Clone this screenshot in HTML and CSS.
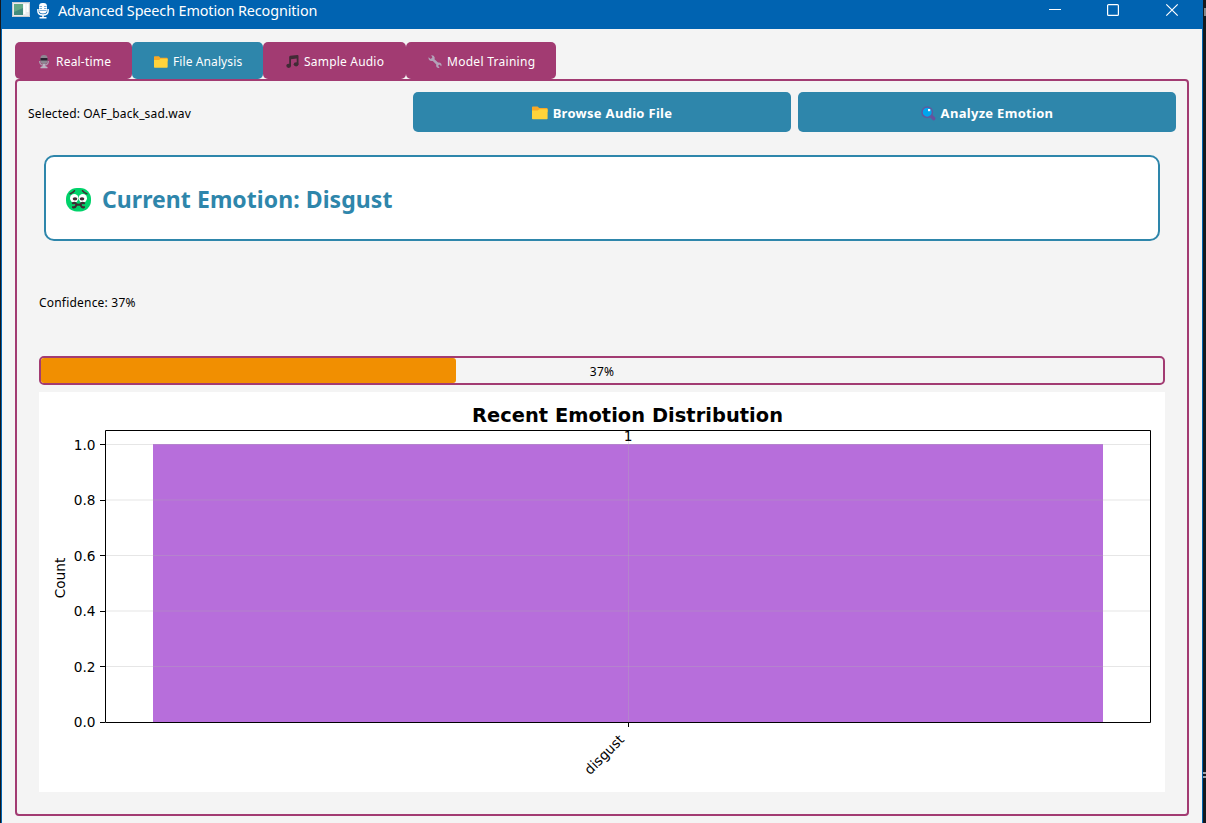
FILE: index.html
```html
<!DOCTYPE html>
<html lang="en">
<head>
<meta charset="utf-8">
<title>Advanced Speech Emotion Recognition</title>
<link rel="stylesheet" href="styles.css">
</head>
<body>
<svg class="defs" aria-hidden="true">
  <symbol id="folder" viewBox="0 0 16 14">
    <path d="M0 1.2Q0 .4.8.4H5.6L7.2 2H14.8Q15.6 2 15.6 2.8V6H0Z" fill="#f9a825"/>
    <path d="M0 4.6H5.8L7.4 3.2H15.6V12.4Q15.6 13.2 14.8 13.2H.8Q0 13.2 0 12.4Z" fill="#ffd43b"/>
  </symbol>
</svg>
<div class="window">
  <header class="titlebar">
    <svg class="app-icon" width="18" height="15" viewBox="0 0 18 15"><rect width="18" height="15" fill="#e9eaec"/><rect x="2" y="2" width="9" height="11" fill="#438b7d"/><path d="M2 2H11V6L2 10Z" fill="#62a986"/><path d="M12.5 2V12M15.5 2V10" stroke="#fff" stroke-width="2"/><path d="M.5.5H17.5V14.5H.5Z" fill="none" stroke="#c8ccd1"/></svg>
    <svg class="title-mic" width="12" height="16" viewBox="0 0 12 16"><rect x="2" y="0" width="8" height="10.5" rx="3.4" fill="#fff"/><path d="M2.5 3.5H5M7 3.5H9.5M2.5 5.5H5M7 5.5H9.5M2.5 7.5H9.5" stroke="#0063b1" stroke-width=".5"/><path d="M.9 6V8Q.9 12 6 12T11.1 8V6M6 12V14.5M2.5 14.8H9.5" fill="none" stroke="#fff" stroke-width="1.5"/></svg>
    <span class="title">Advanced Speech Emotion Recognition</span>
    <svg class="controls" width="132" height="14" viewBox="0 0 132 14"><path d="M0 6.5H12" stroke="#fff"/><rect x="58.6" y="1.6" width="10.8" height="10.8" rx="1" fill="none" stroke="#fff" stroke-width="1.2"/><path d="M117.3 1.3L128.7 12.7M128.7 1.3L117.3 12.7" stroke="#fff" stroke-width="1.2"/></svg>
  </header>
  <main class="content">
    <nav class="tabs">
      <div class="tab tab-realtime">
        <svg width="10" height="14" viewBox="0 0 10 14"><rect x="1.5" y="0" width="7" height="9" rx="3.2" fill="#8d8792"/><path d="M1.5 3.5Q1.5 3 2.3 3H7.7Q8.5 3 8.5 3.5V5.5H1.5Z" fill="#2b2230"/><path d="M.6 6Q.6 10.2 5 10.2T9.4 6" fill="none" stroke="#aaa0b0" stroke-width="1.2"/><path d="M3.8 9H6.2V11L8.5 12V13.2H1.5V12L3.8 11Z" fill="#bbb3c1"/></svg>
        <span>Real-time</span>
      </div>
      <div class="tab tab-file active">
        <svg width="14" height="12" viewBox="0 0 16 13.5" preserveAspectRatio="none"><use href="#folder" width="16" height="14"/></svg>
        <span>File Analysis</span>
      </div>
      <div class="tab tab-sample">
        <svg width="13" height="13" viewBox="0 0 13 13"><path d="M3.2 2Q3.2 1 4.2.8L11.5 0Q12.5 0 12.5 1V9H10.7V3.6L5 4.3V11H3.2Z" fill="#402b35"/><ellipse cx="2.7" cy="10.8" rx="2.4" ry="2.1" fill="#402b35"/><ellipse cx="10.1" cy="9.3" rx="2.4" ry="2.1" fill="#402b35"/></svg>
        <span>Sample Audio</span>
      </div>
      <div class="tab tab-model">
        <svg width="14" height="14" viewBox="0 0 14 14"><path d="M3.2.3Q5.8-.1 6.6 2.2Q6.9 3.2 6.5 4.2L10 7.5Q12 7 13.2 8.7Q13.9 10 13.3 11.3L11.3 9.6L10.1 10.7L11.5 12.8Q10 13.5 8.8 12.3Q7.8 11 8.3 9.4L4.8 5.9Q2.6 6.5 1.2 5Q.2 3.8.6 2.2L2.7 4L4.4 2.5Z" fill="#b3a3b9"/></svg>
        <span>Model Training</span>
      </div>
    </nav>
    <section class="pane">
      <div class="toolbar">
        <div class="selected"><span>Selected: OAF_back_sad.wav</span></div>
        <div class="button browse"><svg width="16" height="14" viewBox="0 0 16 14"><use href="#folder" width="16" height="14"/></svg><span>Browse Audio File</span></div>
        <div class="button analyze"><svg width="15" height="15" viewBox="0 0 15 15"><path d="M10.6 10.6L12.7 12.6" stroke="#6b4f9c" stroke-width="3.4" stroke-linecap="round"/><circle cx="6.2" cy="6.2" r="5.2" fill="#00a6ed" stroke="#5f5a9e" stroke-width="1.5"/><rect x="7" y="3" width="2.2" height="2.2" fill="#fff"/></svg><span>Analyze Emotion</span></div>
      </div>
      <div class="emotion">
        <svg width="25" height="24" viewBox="0 0 25 24"><rect width="25" height="23.4" rx="10.8" fill="#00d26a"/><circle cx="8.2" cy="10.2" r="4.2" fill="#fff"/><circle cx="16.8" cy="10.2" r="4.2" fill="#fff"/><ellipse cx="9" cy="10.8" rx="2.3" ry="1.6" fill="#402a32"/><ellipse cx="16" cy="10.8" rx="2.3" ry="1.6" fill="#402a32"/><path d="M4.2 5.7Q6.6 5.1 8.5 2.7M20.8 5.7Q18.4 5.1 16.5 2.7" fill="none" stroke="#402a32" stroke-width="1.5" stroke-linecap="round"/><path d="M6.8 15.2Q9.3 14.2 10.3 16.2L12.5 16.7L14.7 16.2Q15.7 14.2 18.2 15.2M7 19.2Q9 20 10.3 17.2M18 19.2Q16 20 14.7 17.2" fill="none" stroke="#402a32" stroke-width="2.1" stroke-linecap="round"/></svg>
        <span>Current Emotion: Disgust</span>
      </div>
      <div class="confidence"><span>Confidence: 37%</span></div>
      <div class="progress"><div class="chunk" style="width:37%"></div><span class="value">37%</span></div>
      <svg class="chart" width="1126" height="400" viewBox="39 392 1126 400">
        <rect x="39" y="392" width="1126" height="400" fill="#fff"/>
        <rect x="153" y="444" width="950" height="278" fill="#b76edb"/>
        <path d="M105 444.5H1150M105 500H1150M105 555.5H1150M105 611H1150M105 666.5H1150M628.5 431V722" stroke="#b0b0b0" stroke-opacity=".32"/>
        <path d="M105.5 430.5H1150.5V722.5H105.5ZM100 444.5H105M100 500.5H105M100 555.5H105M100 611.5H105M100 666.5H105M100 722.5H105M628.5 723V727" fill="none" stroke="#000"/>
        <g class="ticks" text-anchor="end">
          <text x="95.5" y="450">1.0</text><text x="95.5" y="505">0.8</text><text x="95.5" y="561">0.6</text><text x="95.5" y="616">0.4</text><text x="95.5" y="672">0.2</text><text x="95.5" y="727">0.0</text>
        </g>
        <text class="chart-title" x="472" y="421.5" textLength="311">Recent Emotion Distribution</text>
        <text class="ticks" x="628" y="441" text-anchor="middle">1</text>
        <text class="ticks" transform="translate(65 578) rotate(-90)" text-anchor="middle">Count</text>
        <text class="ticks" transform="translate(625 740.5) rotate(-45)" text-anchor="end">disgust</text>
      </svg>
    </section>
  </main>
</div>
</body>
</html>
```
FILE: styles.css
```css
* { box-sizing: border-box; }
body {
  margin: 0;
  height: 823px;
  overflow: hidden;
  padding: 0 3px 0 1px;
  background:
    linear-gradient(#a0a3a8, #a0a3a8) right 772px / 3px 2px no-repeat,
    linear-gradient(#a0a3a8, #a0a3a8) right 776px / 3px 2px no-repeat,
    linear-gradient(#85888d, #85888d) right 8px / 2px 8px no-repeat,
    #15181d;
  font-family: "Noto Sans", "Open Sans", sans-serif;
  font-size: 12px;
  color: #000;
}
svg { display: block; flex: none; }
span { white-space: nowrap; }
.defs { width: 0; height: 0; position: absolute; }
.window {
  height: 823px;
  background: #f4f4f4;
  border: solid #0063b1;
  border-width: 0 1px;
}
.titlebar {
  height: 29px;
  background: #0063b1;
  color: #fff;
  display: flex;
  padding-left: 10px;
}
.app-icon { margin-top: 2px; }
.title-mic { margin: 3px 0 0 7px; }
.title { margin-left: 9px; font-size: 14.4px; line-height: 22px; letter-spacing: -0.12px; }
.controls { margin: 3px 21px 0 auto; }
.content { padding: 13px 13px 0; }
.tabs { display: flex; height: 37px; }
.tab {
  display: flex;
  align-items: center;
  border-radius: 5px;
  background: #a23b72;
  color: #fff;
  padding-top: 2px;
  letter-spacing: 0.2px;
}
.tab.active { background: #2e86ab; letter-spacing: 0.1px; }
.tab-realtime { width: 117px; padding-left: 24px; gap: 7px; }
.tab-file { width: 131px; padding-left: 22px; gap: 5px; }
.tab-sample { width: 143px; padding-left: 23px; gap: 5px; }
.tab-model { width: 150px; padding-left: 22px; gap: 5px; letter-spacing: 0.28px; }
.pane {
  height: 737px;
  border: 2px solid #a23b72;
  border-radius: 4px;
  padding: 11px 11px 0;
}
.toolbar { display: grid; grid-template-columns: 378px 378px 378px; gap: 7px; height: 40px; }
.selected { display: flex; align-items: center; padding-top: 2px; letter-spacing: 0.15px; }
.button {
  display: flex;
  align-items: center;
  justify-content: center;
  gap: 5px;
  border-radius: 5px;
  background: #2e86ab;
  color: #fff;
  font-weight: 700;
  font-size: 13px;
  letter-spacing: 0.3px;
  padding-top: 2px;
}
.emotion {
  display: flex;
  align-items: center;
  gap: 11px;
  height: 86px;
  margin: 23px 16px 0;
  padding: 3px 0 0 20px;
  border: 2px solid #2e86ab;
  border-radius: 10px;
  background: #fff;
  color: #2e86ab;
  font-size: 23px;
  font-weight: 700;
  letter-spacing: 0.06px;
}
.emotion span { margin-top: -2px; }
.confidence {
  height: 115px;
  padding: 7px 0 0 11px;
  display: flex;
  align-items: center;
  letter-spacing: 0.2px;
}
.progress {
  position: relative;
  height: 29px;
  margin: 0 11px;
  border: 2px solid #a23b72;
  border-radius: 5px;
}
.chunk { height: 25px; background: #f18f01; border-radius: 3px; }
.value { position: absolute; inset: 1px 0 0; text-align: center; line-height: 25px; letter-spacing: 0.2px; }
.chart { margin: 7px 11px 0; }
.chart text { font-family: "DejaVu Sans", sans-serif; }
.chart .ticks { font-size: 13.7px; }
.chart .chart-title { font-size: 19.4px; font-weight: 700; }
```
